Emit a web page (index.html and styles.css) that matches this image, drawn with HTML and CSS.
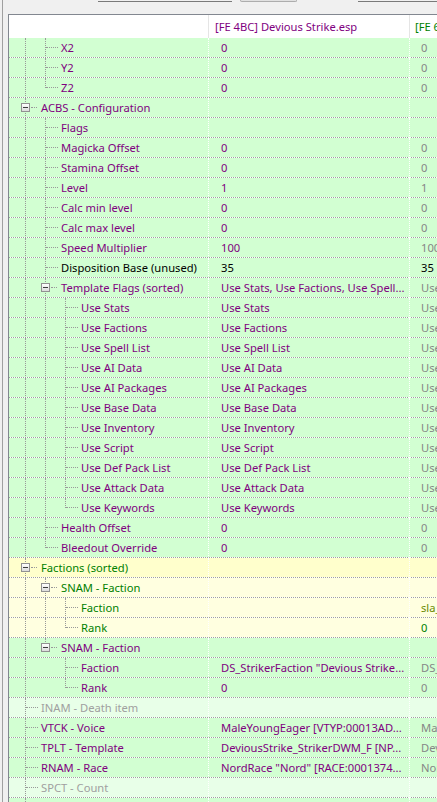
FILE: index.html
```html
<!DOCTYPE html>
<html lang="en">
<head>
  <meta charset="UTF-8">
  <title>NPC_ - Devious Strike</title>
  <link rel="stylesheet" href="styles.css">
</head>
<body>
  <div class="side"></div>
  <div class="pane">
    <div class="toolbar">
      <span class="combo"></span>
      <span class="btn"></span>
      <span class="combo wide"></span>
    </div>

    <div class="grid">
      <div class="row head">
        <div class="cell"></div>
        <div class="cell p">[FE 4BC] Devious Strike.esp</div>
        <div class="cell g">[FE 6E2] SexLabAroused.esm</div>
      </div>

      <!-- position block (tail) -->
      <div class="row">
        <div class="cell tree p"><i class="ln ln-pipe"></i><i class="ln ln-tee"></i><span class="name">X2</span></div>
        <div class="cell p">0</div><div class="cell alt">0</div>
      </div>
      <div class="row">
        <div class="cell tree p"><i class="ln ln-pipe"></i><i class="ln ln-tee"></i><span class="name">Y2</span></div>
        <div class="cell p">0</div><div class="cell alt">0</div>
      </div>
      <div class="row">
        <div class="cell tree p"><i class="ln ln-pipe"></i><i class="ln ln-end"></i><span class="name">Z2</span></div>
        <div class="cell p">0</div><div class="cell alt">0</div>
      </div>

      <!-- ACBS -->
      <div class="row">
        <div class="cell tree p"><i class="ln ln-box"><b class="minus"></b></i><span class="name">ACBS - Configuration</span></div>
        <div class="cell p"></div><div class="cell alt"></div>
      </div>
      <div class="row">
        <div class="cell tree p"><i class="ln ln-pipe"></i><i class="ln ln-tee"></i><span class="name">Flags</span></div>
        <div class="cell p"></div><div class="cell alt"></div>
      </div>
      <div class="row">
        <div class="cell tree p"><i class="ln ln-pipe"></i><i class="ln ln-tee"></i><span class="name">Magicka Offset</span></div>
        <div class="cell p">0</div><div class="cell alt">0</div>
      </div>
      <div class="row">
        <div class="cell tree p"><i class="ln ln-pipe"></i><i class="ln ln-tee"></i><span class="name">Stamina Offset</span></div>
        <div class="cell p">0</div><div class="cell alt">0</div>
      </div>
      <div class="row">
        <div class="cell tree p"><i class="ln ln-pipe"></i><i class="ln ln-tee"></i><span class="name">Level</span></div>
        <div class="cell p">1</div><div class="cell alt">1</div>
      </div>
      <div class="row">
        <div class="cell tree p"><i class="ln ln-pipe"></i><i class="ln ln-tee"></i><span class="name">Calc min level</span></div>
        <div class="cell p">0</div><div class="cell alt">0</div>
      </div>
      <div class="row">
        <div class="cell tree p"><i class="ln ln-pipe"></i><i class="ln ln-tee"></i><span class="name">Calc max level</span></div>
        <div class="cell p">0</div><div class="cell alt">0</div>
      </div>
      <div class="row">
        <div class="cell tree p"><i class="ln ln-pipe"></i><i class="ln ln-tee"></i><span class="name">Speed Multiplier</span></div>
        <div class="cell p">100</div><div class="cell alt">100</div>
      </div>
      <div class="row">
        <div class="cell tree k"><i class="ln ln-pipe"></i><i class="ln ln-tee"></i><span class="name">Disposition Base (unused)</span></div>
        <div class="cell k">35</div><div class="cell k">35</div>
      </div>

      <!-- template flags -->
      <div class="row">
        <div class="cell tree p"><i class="ln ln-pipe"></i><i class="ln ln-box"><b class="minus"></b></i><span class="name">Template Flags (sorted)</span></div>
        <div class="cell p">Use Stats, Use Factions, Use Spell...</div><div class="cell alt">Use Stats, Use Factions, Use Spell...</div>
      </div>
      <div class="row">
        <div class="cell tree p"><i class="ln ln-pipe"></i><i class="ln ln-pipe"></i><i class="ln ln-tee"></i><span class="name">Use Stats</span></div>
        <div class="cell p">Use Stats</div><div class="cell alt">Use Stats</div>
      </div>
      <div class="row">
        <div class="cell tree p"><i class="ln ln-pipe"></i><i class="ln ln-pipe"></i><i class="ln ln-tee"></i><span class="name">Use Factions</span></div>
        <div class="cell p">Use Factions</div><div class="cell alt">Use Factions</div>
      </div>
      <div class="row">
        <div class="cell tree p"><i class="ln ln-pipe"></i><i class="ln ln-pipe"></i><i class="ln ln-tee"></i><span class="name">Use Spell List</span></div>
        <div class="cell p">Use Spell List</div><div class="cell alt">Use Spell List</div>
      </div>
      <div class="row">
        <div class="cell tree p"><i class="ln ln-pipe"></i><i class="ln ln-pipe"></i><i class="ln ln-tee"></i><span class="name">Use AI Data</span></div>
        <div class="cell p">Use AI Data</div><div class="cell alt">Use AI Data</div>
      </div>
      <div class="row">
        <div class="cell tree p"><i class="ln ln-pipe"></i><i class="ln ln-pipe"></i><i class="ln ln-tee"></i><span class="name">Use AI Packages</span></div>
        <div class="cell p">Use AI Packages</div><div class="cell alt">Use AI Packages</div>
      </div>
      <div class="row">
        <div class="cell tree p"><i class="ln ln-pipe"></i><i class="ln ln-pipe"></i><i class="ln ln-tee"></i><span class="name">Use Base Data</span></div>
        <div class="cell p">Use Base Data</div><div class="cell alt">Use Base Data</div>
      </div>
      <div class="row">
        <div class="cell tree p"><i class="ln ln-pipe"></i><i class="ln ln-pipe"></i><i class="ln ln-tee"></i><span class="name">Use Inventory</span></div>
        <div class="cell p">Use Inventory</div><div class="cell alt">Use Inventory</div>
      </div>
      <div class="row">
        <div class="cell tree p"><i class="ln ln-pipe"></i><i class="ln ln-pipe"></i><i class="ln ln-tee"></i><span class="name">Use Script</span></div>
        <div class="cell p">Use Script</div><div class="cell alt">Use Script</div>
      </div>
      <div class="row">
        <div class="cell tree p"><i class="ln ln-pipe"></i><i class="ln ln-pipe"></i><i class="ln ln-tee"></i><span class="name">Use Def Pack List</span></div>
        <div class="cell p">Use Def Pack List</div><div class="cell alt">Use Def Pack List</div>
      </div>
      <div class="row">
        <div class="cell tree p"><i class="ln ln-pipe"></i><i class="ln ln-pipe"></i><i class="ln ln-tee"></i><span class="name">Use Attack Data</span></div>
        <div class="cell p">Use Attack Data</div><div class="cell alt">Use Attack Data</div>
      </div>
      <div class="row">
        <div class="cell tree p"><i class="ln ln-pipe"></i><i class="ln ln-pipe"></i><i class="ln ln-end"></i><span class="name">Use Keywords</span></div>
        <div class="cell p">Use Keywords</div><div class="cell alt">Use Keywords</div>
      </div>

      <div class="row">
        <div class="cell tree p"><i class="ln ln-pipe"></i><i class="ln ln-tee"></i><span class="name">Health Offset</span></div>
        <div class="cell p">0</div><div class="cell alt">0</div>
      </div>
      <div class="row">
        <div class="cell tree p"><i class="ln ln-pipe"></i><i class="ln ln-end"></i><span class="name">Bleedout Override</span></div>
        <div class="cell p">0</div><div class="cell alt">0</div>
      </div>

      <!-- factions: overridden in the second file -->
      <div class="row over">
        <div class="cell tree g"><i class="ln ln-box"><b class="minus"></b></i><span class="name">Factions (sorted)</span></div>
        <div class="cell"></div><div class="cell"></div>
      </div>
      <div class="row over-sub">
        <div class="cell tree g"><i class="ln ln-pipe"></i><i class="ln ln-box"><b class="minus"></b></i><span class="name">SNAM - Faction</span></div>
        <div class="cell"></div><div class="cell"></div>
      </div>
      <div class="row over-sub">
        <div class="cell tree g"><i class="ln ln-pipe"></i><i class="ln ln-pipe"></i><i class="ln ln-tee"></i><span class="name">Faction</span></div>
        <div class="cell"></div><div class="cell olive">sla_ArousedFaction "Arousal" [FACT:0003FC36]</div>
      </div>
      <div class="row over-sub">
        <div class="cell tree g"><i class="ln ln-pipe"></i><i class="ln ln-pipe"></i><i class="ln ln-end"></i><span class="name">Rank</span></div>
        <div class="cell"></div><div class="cell g">0</div>
      </div>
      <div class="row">
        <div class="cell tree p"><i class="ln ln-pipe"></i><i class="ln ln-box-end"><b class="minus"></b></i><span class="name">SNAM - Faction</span></div>
        <div class="cell p"></div><div class="cell alt"></div>
      </div>
      <div class="row">
        <div class="cell tree p"><i class="ln ln-pipe"></i><i class="ln"></i><i class="ln ln-tee"></i><span class="name">Faction</span></div>
        <div class="cell p">DS_StrikerFaction "Devious Strike...</div><div class="cell alt">DS_StrikerFaction "Devious Strike...</div>
      </div>
      <div class="row">
        <div class="cell tree p"><i class="ln ln-pipe"></i><i class="ln"></i><i class="ln ln-end"></i><span class="name">Rank</span></div>
        <div class="cell p">0</div><div class="cell alt">0</div>
      </div>

      <!-- subrecords -->
      <div class="row pale">
        <div class="cell tree n"><i class="ln ln-tee"></i><span class="name">INAM - Death item</span></div>
        <div class="cell"></div><div class="cell"></div>
      </div>
      <div class="row">
        <div class="cell tree p"><i class="ln ln-tee"></i><span class="name">VTCK - Voice</span></div>
        <div class="cell p">MaleYoungEager [VTYP:00013AD...</div><div class="cell alt">MaleYoungEager [VTYP:00013AD...</div>
      </div>
      <div class="row">
        <div class="cell tree p"><i class="ln ln-tee"></i><span class="name">TPLT - Template</span></div>
        <div class="cell p">DeviousStrike_StrikerDWM_F [NP...</div><div class="cell alt">DeviousStrike_StrikerDWM_F [NP...</div>
      </div>
      <div class="row">
        <div class="cell tree p"><i class="ln ln-tee"></i><span class="name">RNAM - Race</span></div>
        <div class="cell p">NordRace "Nord" [RACE:0001374...</div><div class="cell alt">NordRace "Nord" [RACE:0001374...</div>
      </div>
      <div class="row pale">
        <div class="cell tree n"><i class="ln ln-tee"></i><span class="name">SPCT - Count</span></div>
        <div class="cell"></div><div class="cell"></div>
      </div>
      <div class="row">
        <div class="cell tree p"><i class="ln ln-tee"></i><span class="name">Spells</span></div>
        <div class="cell p"></div><div class="cell alt"></div>
      </div>
    </div>
  </div>
</body>
</html>
```

FILE: styles.css
```css
html, body {
  margin: 0;
  height: 100%;
  overflow: hidden;
  background-color: #f0f0f0;
}

body {
  display: flex;
  font-family: "Noto Sans", sans-serif;
  font-size: 11.2px;
  color: #000;
}

/* splitter edge on the left */
.side {
  flex: none;
  box-sizing: border-box;
  width: 6px;
  margin-left: 2px;
  border-left: 1px solid #a0a0a0;
}

.pane {
  flex: 1;
  min-width: 0;
  display: flex;
  flex-direction: column;
}

/* bottoms of the filter controls above the view */
.toolbar {
  flex: none;
  display: flex;
  align-items: flex-start;
  height: 14px;
}

.combo {
  width: 134px;
  height: 1px;
  margin-left: 90px;
  border-bottom: 1px solid #7a7a7a;
}

.combo.wide {
  flex: 1;
  width: auto;
  margin-left: 61px;
}

.btn {
  box-sizing: border-box;
  width: 57px;
  height: 2px;
  margin-left: 8px;
  border: 1px solid #adadad;
  border-top: 0;
  border-radius: 0 0 3px 3px;
  background: #e1e1e1;
}

.grid {
  flex: 1;
  overflow: hidden;
  border-left: 1px solid #828790;
  border-top: 1px solid #828790;
  background: #fff;
}

.row {
  display: grid;
  grid-template-columns: 200px 201px 1fr;
  height: 20px;
  background:
    repeating-linear-gradient(90deg, #a0a0a0 0 1px, #fff 1px 2px) left bottom / 100% 1px no-repeat,
    #d2ffd2;
}

.row.over     { background-color: #ffffcc; }
.row.over-sub { background-color: #ffffe0; }
.row.pale     { background-color: #e8ffe8; }

.row.head {
  height: 23px;
  background: #fff;
}

.cell {
  box-sizing: border-box;
  padding-left: 12px;
  border-right: 1px dotted #fff;
  line-height: 19px;
  white-space: nowrap;
  overflow: hidden;
}

.cell:last-child {
  padding-left: 11px;
  border-right: 0;
}

.head .cell {
  padding-left: 6px;
  line-height: 23px;
  border-right: 1px solid #e5e5e5;
}

.head .cell:last-child {
  padding-left: 5px;
  border-right: 0;
}

/* text colours */
.p     { color: #800080; }
.k     { color: #000; }
.g     { color: #008000; }
.olive { color: #6a8a00; }
.n     { color: #a0a0a0; }
.alt   { color: #868686; }

/* tree column */
.tree {
  display: flex;
  padding-left: 6px;
  overflow: visible;
}

.tree .name {
  margin-left: 6px;
}

.ln {
  position: relative;
  flex: none;
  width: 20px;
  height: 20px;
}

.ln-pipe::before,
.ln-tee::before,
.ln-box::before,
.ln-end::before,
.ln-box-end::before {
  content: "";
  position: absolute;
  left: 10px;
  top: 0;
  height: 20px;
  border-left: 1px dotted #999;
}

.ln-end::before,
.ln-box-end::before {
  height: 10px;
}

.ln-tee::after,
.ln-end::after {
  content: "";
  position: absolute;
  left: 11px;
  top: 9px;
  width: 12px;
  border-top: 1px dotted #999;
}

.ln-box::after,
.ln-box-end::after {
  content: "";
  position: absolute;
  left: 16px;
  top: 9px;
  width: 6px;
  border-top: 1px dotted #999;
}

/* expand/collapse button */
.minus {
  position: absolute;
  z-index: 1;
  left: 6px;
  top: 5px;
  box-sizing: border-box;
  width: 9px;
  height: 9px;
  border: 1px solid #919191;
  background: linear-gradient(#ffffff, #dcdcdc);
}

.minus::after {
  content: "";
  position: absolute;
  left: 1px;
  top: 3px;
  width: 5px;
  height: 1px;
  background: #3c3c3c;
}
```
